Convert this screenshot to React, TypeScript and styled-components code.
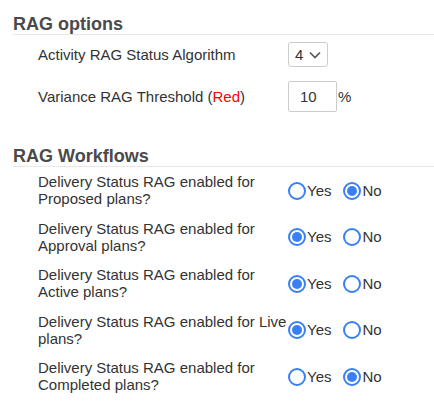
import React, { useState } from 'react';
import styled, { createGlobalStyle } from 'styled-components';

const GlobalStyle = createGlobalStyle`
  body {
    margin: 0;
    background: #fff;
    font-family: "Liberation Sans", Arial, sans-serif;
    color: #333;
  }
`;

const Page = styled.div`
  padding: 14px 0 0 13px;
`;

const Section = styled.section<{ $gap?: number }>`
  margin-top: ${(p) => p.$gap || 0}px;
`;

const SectionTitle = styled.h3`
  margin: 0;
  font-size: 18px;
  font-weight: bold;
  line-height: 20px;
  color: #4a4a4a;
  border-bottom: 1px solid #e8e8e8;
`;

const OptionsList = styled.div`
  display: flex;
  flex-direction: column;
  gap: 14px;
  padding: 7px 0 0 25px;
`;

const FieldRow = styled.div`
  display: flex;
  align-items: center;
  font-size: 15px;
`;

const FieldLabel = styled.div`
  width: 250px;
  flex-shrink: 0;
  line-height: 1.15;
`;

const RedText = styled.span`
  color: #f00;
`;

const SelectBox = styled.div`
  box-sizing: border-box;
  width: 40px;
  height: 25px;
  display: flex;
  align-items: center;
  gap: 6px;
  padding-left: 6px;
  border: 1px solid #ccc;
  border-radius: 3px;
  font-size: 15px;
  color: #333;
`;

const NumberInput = styled.input`
  box-sizing: border-box;
  width: 49px;
  height: 31px;
  padding: 0 0 0 11px;
  border: 1px solid #ccc;
  border-radius: 2px;
  font-family: "Liberation Sans", Arial, sans-serif;
  font-size: 15px;
  color: #333;
  outline: none;
`;

const Unit = styled.span`
  margin-left: 1px;
`;

const WorkflowList = styled.div`
  display: flex;
  flex-direction: column;
`;

const WorkflowRow = styled(FieldRow)`
  padding: 6px 0 6px 25px;
`;

const RadioGroup = styled.div`
  display: flex;
  align-items: center;
  gap: 12px;
`;

const RadioOption = styled.label`
  display: flex;
  align-items: center;
  gap: 1px;
  cursor: pointer;
`;

const RadioCircle = styled.span<{ $checked: boolean }>`
  box-sizing: border-box;
  width: 18px;
  height: 18px;
  border: 2px solid #3a80f5;
  border-radius: 50%;
  display: flex;
  align-items: center;
  justify-content: center;
  margin-top: 1px;

  &::after {
    content: '';
    width: 10px;
    height: 10px;
    border-radius: 50%;
    background: ${(p) => (p.$checked ? '#3a80f5' : 'transparent')};
  }
`;

const Chevron = () => (
  <svg width="12" height="8" viewBox="0 0 12 8">
    <polyline points="1,1.5 6,6.5 11,1.5" fill="none" stroke="#555" strokeWidth="1.6" />
  </svg>
);

const workflows = [
  { label: 'Delivery Status RAG enabled for Proposed plans?', value: false },
  { label: 'Delivery Status RAG enabled for Approval plans?', value: true },
  { label: 'Delivery Status RAG enabled for Active plans?', value: true },
  { label: 'Delivery Status RAG enabled for Live plans?', value: true },
  { label: 'Delivery Status RAG enabled for Completed plans?', value: false },
];

const App: React.FC = () => {
  const [values, setValues] = useState(workflows.map((w) => w.value));

  const setValue = (index: number, v: boolean) => {
    setValues((prev) => prev.map((x, i) => (i === index ? v : x)));
  };

  return (
    <Page>
      <GlobalStyle />
      <Section>
        <SectionTitle>RAG options</SectionTitle>
        <OptionsList>
          <FieldRow>
            <FieldLabel>Activity RAG Status Algorithm</FieldLabel>
            <SelectBox>
              <span>4</span>
              <Chevron />
            </SelectBox>
          </FieldRow>
          <FieldRow>
            <FieldLabel>
              Variance RAG Threshold (<RedText>Red</RedText>)
            </FieldLabel>
            <NumberInput defaultValue="10" />
            <Unit>%</Unit>
          </FieldRow>
        </OptionsList>
      </Section>
      <Section $gap={34}>
        <SectionTitle>RAG Workflows</SectionTitle>
        <WorkflowList>
          {workflows.map((w, i) => (
            <WorkflowRow key={i}>
              <FieldLabel>{w.label}</FieldLabel>
              <RadioGroup>
                <RadioOption onClick={() => setValue(i, true)}>
                  <RadioCircle $checked={values[i]} />
                  Yes
                </RadioOption>
                <RadioOption onClick={() => setValue(i, false)}>
                  <RadioCircle $checked={!values[i]} />
                  No
                </RadioOption>
              </RadioGroup>
            </WorkflowRow>
          ))}
        </WorkflowList>
      </Section>
    </Page>
  );
};

export default App;
